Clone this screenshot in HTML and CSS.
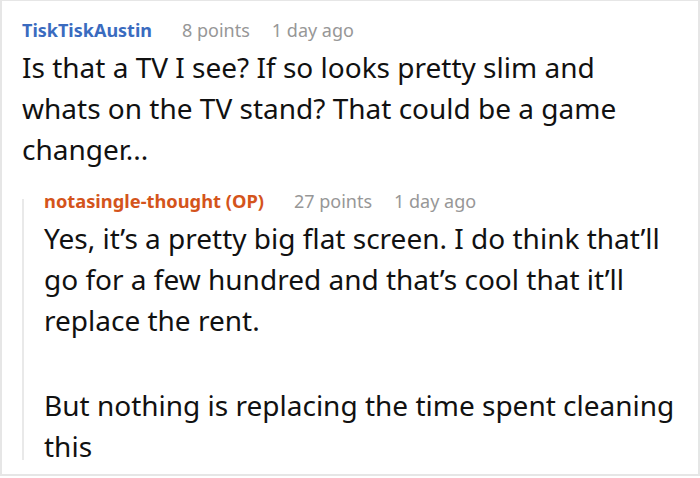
FILE: index.html
```html
<!DOCTYPE html>
<html>
<head>
<meta charset="utf-8">
<link rel="stylesheet" href="styles.css">
</head>
<body>
<div class="frame">
  <div class="comment">
    <div class="meta">
      <span class="author">TiskTiskAustin</span>
      <span class="info">8 points</span>
      <span class="info">1 day ago</span>
    </div>
    <p class="text">Is that a TV I see? If so looks pretty slim and whats on the TV stand? That could be a game changer...</p>
    <div class="reply">
      <div class="rail"></div>
      <div class="reply-body">
        <div class="meta">
          <span class="author op">notasingle-thought (OP)</span>
          <span class="info">27 points</span>
          <span class="info">1 day ago</span>
        </div>
        <p class="text">Yes, it’s a pretty big flat screen. I do think that’ll go for a few hundred and that’s cool that it’ll replace the rent.</p>
        <p class="text para">But nothing is replacing the time spent cleaning this</p>
      </div>
    </div>
  </div>
</div>
</body>
</html>
```
FILE: styles.css
```css
html, body {
  margin: 0;
  padding: 0;
  background: #fff;
}
.frame {
  width: 700px;
  height: 476px;
  box-sizing: border-box;
  border: 2px solid #e6e6e6;
  border-top-width: 1px;
  font-family: "Noto Sans", "Open Sans", sans-serif;
  overflow: hidden;
}
.comment {
  padding: 15px 20px 0 20px;
}
.meta {
  display: flex;
  align-items: baseline;
  gap: 22px;
  font-size: 18px;
  line-height: 28px;
  height: 28px;
}
.author {
  font-weight: bold;
  color: #3a6bbf;
  margin-right: 8px;
}
.author.op {
  color: #d4541b;
  font-size: 18.3px;
}
.info {
  color: #979797;
}
.text {
  margin: 3px 0 0 0;
  font-size: 28px;
  line-height: 41px;
  color: #111;
}
.text.para {
  margin-top: 44px;
}
.reply {
  display: flex;
  margin-top: 17px;
}
.rail {
  flex: 0 0 2px;
  background: #e9e9e9;
  margin: 12px 0 7px 0;
}
.reply-body {
  padding-left: 20px;
}
```
